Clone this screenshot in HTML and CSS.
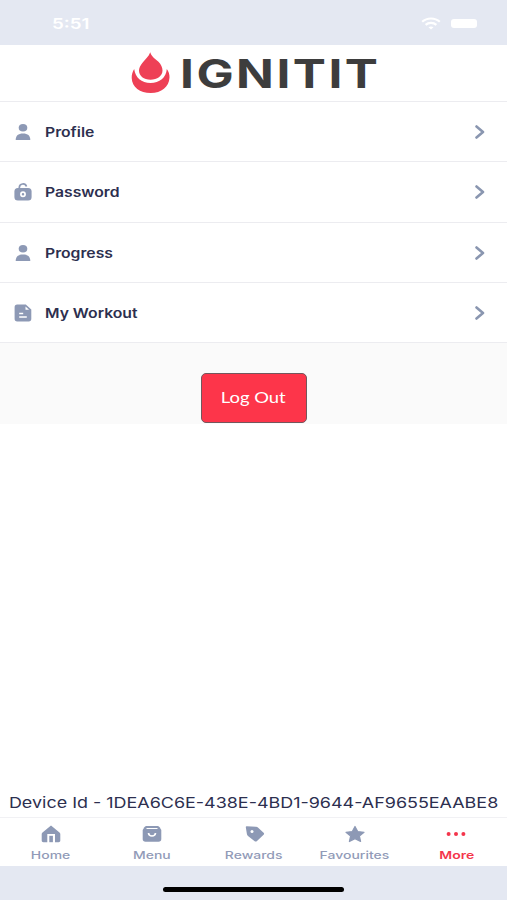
FILE: index.html
```
<!DOCTYPE html>
<html lang="en">
<head>
    <meta charset="UTF-8">
    <title>Ignitit</title>
    <link rel="stylesheet" href="styles.css">
</head>
<body>
<div class="app">
    <!-- status bar -->
    <div class="status">
        <span class="time">5:51</span>
        <svg class="wifi" width="20" height="13" viewBox="0 0 20 13" fill="none" stroke="#fff" stroke-width="2.2">
            <path d="M1.2 4.8C6 .4 14 .4 18.800 4.800M4.600 7.900c3-2.700 7.800-2.700 10.800 0"/>
            <path d="M10 12.500l-2.500-2.200c1.400-1.100 3.600-1.100 5 0z" fill="#fff" stroke="none"/>
        </svg>
        <span class="battery"></span>
    </div>

    <!-- logo -->
    <div class="header">
        <svg class="flame" width="40" height="42" viewBox="0 0 40 42" fill="#ee4056">
            <path d="M19.300.3C17.500 5 14 7.500 11.300 11C9.300 13.500 8 16 8 18.500C8 24 12.800 27.800 19.500 27.800S31.500 24 31.500 18.500C31.500 15.500 30 12.500 27.500 9.800C24.500 7 20.500 5 19.300.3z"/>
            <path d="M3.200 17C4.200 25.500 10.500 31 19.500 31S35.300 25.500 35.800 17C37.700 19.500 38.600 22.300 38.500 25.500C38 35 30.500 41 19.700 41S1 35 .7 26C.6 22.500 1.600 19.500 3.200 17z"/>
        </svg>
        <span class="brand">IGNITIT</span>
    </div>

    <ul class="list">
        <li>
            <svg class="icon" width="18" height="18" viewBox="0 0 18 18" fill="#8d99b5"><ellipse cx="9" cy="4.800" rx="4.300" ry="3.800"/><path d="M1.700 17c0-4.400 2.500-6.500 7.300-6.500s7.300 2.100 7.300 6.500z"/></svg>
            <span class="name">Profile</span>
            <svg class="arrow" width="10" height="14" viewBox="0 0 10 14"><path d="M1.500 1.500L8 7l-6.500 5.500"/></svg>
        </li>
        <li>
            <svg class="icon" width="18" height="18" viewBox="0 0 18 18" fill="#8d99b5"><path d="M5.300 6V4.500a3.700 3.700 0 0 1 7.200-1" fill="none" stroke="#8d99b5" stroke-width="1.700"/><rect x=".4" y="5" width="17.200" height="12.500" rx="3.500"/><circle cx="9" cy="11.200" r="2.100" fill="#8d99b5" stroke="#fff" stroke-width="1.700"/></svg>
            <span class="name">Password</span>
            <svg class="arrow" width="10" height="14" viewBox="0 0 10 14"><path d="M1.500 1.500L8 7l-6.500 5.500"/></svg>
        </li>
        <li>
            <svg class="icon" width="18" height="18" viewBox="0 0 18 18" fill="#8d99b5"><ellipse cx="9" cy="4.800" rx="4.300" ry="3.800"/><path d="M1.700 17c0-4.400 2.500-6.500 7.300-6.500s7.300 2.100 7.300 6.500z"/></svg>
            <span class="name">Progress</span>
            <svg class="arrow" width="10" height="14" viewBox="0 0 10 14"><path d="M1.500 1.500L8 7l-6.500 5.500"/></svg>
        </li>
        <li>
            <svg class="icon" width="18" height="18" viewBox="0 0 18 18"><path d="M3.200.6h8.600l5.500 5v9.200a2.600 2.600 0 0 1-2.600 2.600H3.200A2.600 2.600 0 0 1 .6 14.800V3.200A2.600 2.600 0 0 1 3.200.6z" fill="#8d99b5"/><path d="M11.500 2.600l3.600 3.200h-3.600z" fill="#fff"/><path d="M5.200 9.500h4M5.200 13h7.600" fill="none" stroke="#fff" stroke-width="1.400"/></svg>
            <span class="name">My Workout</span>
            <svg class="arrow" width="10" height="14" viewBox="0 0 10 14"><path d="M1.500 1.500L8 7l-6.500 5.500"/></svg>
        </li>
    </ul>

    <div class="logout">
        <button class="btn"><span>Log Out</span></button>
    </div>

    <div class="device"><span>Device Id - 1DEA6C6E-438E-4BD1-9644-AF9655EAABE8</span></div>

    <!-- tab bar -->
    <div class="tabs">
        <div class="tab">
            <svg width="20" height="18" viewBox="0 0 20 18" fill="#8d99b5"><path d="M10 .5l8.500 7c.6.600.8 1 .8 1.700v6.300c0 1-.7 1.700-1.700 1.700H14V9H6.300v8.200H2.400c-1 0-1.700-.7-1.700-1.700V9.200c0-.7.2-1.100.8-1.700z"/><path d="M8.300 10.800h3.600v6.400H8.300z"/></svg>
            <span>Home</span>
        </div>
        <div class="tab">
            <svg width="20" height="18" viewBox="0 0 20 18"><path d="M5 1h10c1.200 0 2 .4 2.600 1.300L19.300 5v9c0 1.800-1 2.800-2.800 2.800h-13C1.700 16.800.7 15.800.7 14V5l1.700-2.700C3 1.400 3.800 1 5 1z" fill="#8d99b5"/><path d="M4.500 3.500h11" fill="none" stroke="#fff" stroke-width="1"/><path d="M6.500 8c.4 4 6.600 4 7 0" fill="none" stroke="#fff" stroke-width="1.700"/></svg>
            <span>Menu</span>
        </div>
        <div class="tab">
            <svg class="tag" width="20" height="18" viewBox="0 0 20 18"><path d="M.8 2.200C.7 1.500 1 1.200 1.700 1.200l9.300.6c.9.100 1.500.3 2.200.9l5.400 5c.7.700.7 1.400 0 2L12 16c-.8.700-1.800.7-2.600 0L3 11c-.7-.6-1-1.200-1.100-2z" fill="#8d99b5"/><circle cx="7" cy="6.500" r="1.500" fill="#fff"/></svg>
            <span>Rewards</span>
        </div>
        <div class="tab">
            <svg width="22" height="18" viewBox="0 0 22 18"><path d="M11 1.500l2.700 5 6.300.8-4.600 3.800 1.200 5.400-5.600-2.700-5.600 2.700 1.200-5.400L2 7.300l6.300-.8z" fill="#8d99b5" stroke="#8d99b5" stroke-width="1.200" stroke-linejoin="round"/></svg>
            <span>Favourites</span>
        </div>
        <div class="tab active">
            <svg width="20" height="18" viewBox="0 0 20 18" fill="#f4354b"><circle cx="2.600" cy="9" r="2"/><circle cx="10" cy="9" r="2"/><circle cx="17.400" cy="9" r="2"/></svg>
            <span>More</span>
        </div>
    </div>
    <div class="bottom"><div class="bar"></div></div>
</div>
</body>
</html>
```

FILE: styles.css
```
* {
    margin: 0;
    padding: 0;
    box-sizing: border-box;
}

body {
    font-family: Inter, "Liberation Sans", sans-serif;
    background-color: #fff;
    color: #2d2f4f;
}

ul {
    list-style: none;
}

svg {
    display: block;
    flex: none;
}

span {
    white-space: nowrap;
}

.app {
    height: 900px;
    display: flex;
    flex-direction: column;
    overflow: hidden;
}

.status {
    height: 45px;
    padding: 2px 30px 0 52px;
    display: flex;
    align-items: center;
    background-color: #e4e8f2;
    color: #fff;
}

.time {
    font-size: 15px;
    font-weight: 600;
    transform: scaleX(1.25);
    transform-origin: left;
}

.wifi {
    margin-left: auto;
    margin-right: 10px;
}

.battery {
    width: 26px;
    height: 9px;
    border-radius: 3px;
    background-color: #fff;
}

.header {
    height: 57px;
    padding-left: 131px;
    display: flex;
    align-items: center;
    border-bottom: 1px solid #ececf0;
}

.brand {
    margin-left: 9px;
    padding-top: 2px;
    font-size: 40px;
    font-weight: 700;
    line-height: 40px;
    letter-spacing: 2px;
    color: #3d3d3d;
    transform: scaleX(1.24);
    transform-origin: left;
}

.list li {
    height: 60.25px;
    padding: 1px 22px 0 14px;
    display: flex;
    align-items: center;
    border-bottom: 1px solid #ececf0;
}

.name {
    margin-left: 13px;
    font-size: 13px;
    font-weight: 600;
    transform: scaleX(1.21);
    transform-origin: left;
}

.arrow {
    margin-left: auto;
    fill: none;
    stroke: #8a96b0;
    stroke-width: 2.6;
    stroke-linecap: round;
    stroke-linejoin: round;
}

.logout {
    height: 81px;
    padding-bottom: 1px;
    display: flex;
    justify-content: center;
    align-items: flex-end;
    background-color: #fafafa;
}

.btn {
    width: 106px;
    height: 50px;
    padding-bottom: 3px;
    border: 1px solid #74565c;
    border-radius: 5px;
    background-color: #fd354a;
    color: #fff;
    font-family: Lato, sans-serif;
    font-size: 16px;
}

.btn span {
    display: inline-block;
    transform: scaleX(1.15);
}

.device {
    margin-top: auto;
    height: 30px;
    display: flex;
    justify-content: center;
    align-items: center;
    font-size: 15px;
}

.device span {
    transform: scaleX(1.196);
}

.tabs {
    height: 49px;
    display: flex;
    border-top: 1px solid #f1f1f4;
}

.tab {
    flex: 1;
    padding-top: 7px;
    display: flex;
    flex-direction: column;
    align-items: center;
    color: #929bb8;
}

.tab .tag {
    margin-left: 2px;
}

.tab span {
    margin-top: 5px;
    font-size: 11px;
    font-weight: 500;
    line-height: 15px;
    transform: scaleX(1.27);
}

.tab.active {
    color: #f4354b;
}

.tab.active span {
    font-weight: 600;
}

.bottom {
    height: 34px;
    padding-top: 21px;
    background-color: #e4e8f2;
}

.bar {
    width: 181px;
    height: 5px;
    margin: 0 auto;
    border-radius: 3px;
    background-color: #000;
}
```
